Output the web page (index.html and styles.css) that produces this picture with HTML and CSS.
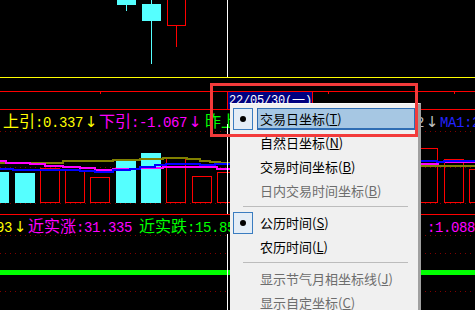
FILE: index.html
```html
<!DOCTYPE html>
<html>
<head>
<meta charset="utf-8">
<link rel="stylesheet" href="styles.css">
</head>
<body>
<div class="screen">
  <svg class="chart" width="475" height="77" viewBox="0 0 475 77">
    <rect x="126" y="5" width="1" height="6" fill="#55ffff"/>
    <rect x="117" y="0" width="19" height="5" fill="#55ffff"/>
    <rect x="151" y="0" width="1" height="64" fill="#55ffff"/>
    <rect x="142" y="4" width="19" height="17" fill="#55ffff"/>
    <rect x="176" y="26" width="1" height="21" fill="#ff0000"/>
    <rect x="167.5" y="-0.5" width="18" height="26" fill="none" stroke="#ff0000"/>
  </svg>
  <div class="yline"></div>
  <div class="blank"></div>
  <div class="dateaxis">
    <div class="datelabel"><span class="dl-n">22/05/30(</span><span class="dl-c">一</span><span class="dl-n">)</span></div>
  </div>

  <div class="pane">
    <div class="info">
      <div class="info-l">
        <span class="seg yel first1">上引<span class="n">:0.337</span><span class="arr">↓</span></span>
        <span class="seg mag">下引<span class="n">:-1.067</span><span class="arr">↓</span></span>
        <span class="seg grn sp2">昨上</span>
      </div>
      <div class="info-r r1">
        <span class="seg gry"><span class="n">2</span><span class="arr">↓</span></span>
        <span class="seg blu"><span class="n">MA1:2</span></span>
      </div>
    </div>
    <svg class="chart" width="475" height="83" viewBox="0 0 475 83">
      <g stroke="#800000" stroke-dasharray="1 4">
        <line x1="0" y1="0.5" x2="475" y2="0.5"/>
        <line x1="0" y1="36.5" x2="475" y2="36.5"/>
        <line x1="0" y1="72.5" x2="475" y2="72.5"/>
      </g>
      <g fill="#55ffff">
        <rect x="0" y="41" width="9" height="31"/>
        <rect x="15" y="42" width="20" height="30"/>
        <rect x="116" y="28" width="20" height="44"/>
        <rect x="141" y="22" width="20" height="50"/>
      </g>
      <g fill="none" stroke="#ff0000">
        <rect x="40.5" y="37.5" width="19" height="34"/>
        <rect x="65.5" y="39.5" width="19" height="32"/>
        <rect x="90.5" y="46.5" width="19" height="25"/>
        <rect x="166.5" y="27.5" width="19" height="44"/>
        <rect x="192.5" y="45.5" width="19" height="26"/>
        <rect x="217.5" y="41.5" width="19" height="30"/>
        <rect x="418.5" y="17.5" width="19" height="54"/>
        <rect x="444.5" y="28.5" width="19" height="43"/>
        <rect x="469.5" y="38.5" width="19" height="33"/>
      </g>
      <rect x="183" y="26" width="3" height="2" fill="#ff0000"/>
      <g fill="none" stroke-width="2">
        <path stroke="#808000" d="M0 32 H63 V30 H113 V29 H140 V28 H163 V27 H187 V28 H200 V30 H210 V31 H220 V32 H240 V34 H420 V35 H475"/>
        <path stroke="#ff00ff" d="M0 30 H6 V32 H30 V33 H45 V35 H63 V36 H80 V37 H95 V39 H113 V38 H140 V37 H163 V36 H217 V38 H240 V36 H420 V33 H438 V31 H475"/>
        <path stroke="#0000ff" d="M0 38 H13 V39 H80 V40 H95 V41 H113 V39 H130 V38 H140 V36 H155 V34 H166 V33 H185 V33 H200 V34 H215 V33 H240 V32 H420 V30 H437 V31 H444 V30 H475"/>
      </g>
    </svg>
  </div>

  <div class="pane top-red">
    <div class="info">
      <div class="info-l">
        <span class="seg yel first2"><span class="n">93</span><span class="arr">↓</span></span>
        <span class="seg mag">近实涨<span class="n">:31.335</span></span>
        <span class="seg grn sp7">近实跌<span class="n">:15.85</span></span>
      </div>
      <div class="info-r r2">
        <span class="seg mag"><span class="n">:1.088</span></span>
      </div>
    </div>
    <svg class="chart" width="475" height="75" viewBox="0 0 475 75">
      <g stroke="#800000" stroke-dasharray="1 4">
        <line x1="0" y1="0.5" x2="475" y2="0.5"/>
        <line x1="0" y1="18.5" x2="475" y2="18.5"/>
        <line x1="0" y1="56.5" x2="475" y2="56.5"/>
      </g>
      <rect x="0" y="35" width="475" height="5" fill="#00ff00"/>
    </svg>
  </div>

  <div class="vline v1"></div>
  <div class="vline v2"></div>
  <div class="vline v3"></div>

  <div class="menu">
    <div class="item">
      <span class="chk on"><span class="dot"></span></span>
      <span class="lbl hl">交易日坐标(<u>T</u>)</span>
    </div>
    <div class="item">
      <span class="chk"></span>
      <span class="lbl">自然日坐标(<u>N</u>)</span>
    </div>
    <div class="item">
      <span class="chk"></span>
      <span class="lbl">交易时间坐标(<u>B</u>)</span>
    </div>
    <div class="item dis">
      <span class="chk"></span>
      <span class="lbl">日内交易时间坐标(<u>B</u>)</span>
    </div>
    <div class="sep"></div>
    <div class="item">
      <span class="chk on"><span class="dot"></span></span>
      <span class="lbl">公历时间(<u>S</u>)</span>
    </div>
    <div class="item">
      <span class="chk"></span>
      <span class="lbl">农历时间(<u>L</u>)</span>
    </div>
    <div class="sep"></div>
    <div class="item dis">
      <span class="chk"></span>
      <span class="lbl">显示节气月相坐标线(<u>J</u>)</span>
    </div>
    <div class="item dis">
      <span class="chk"></span>
      <span class="lbl">显示自定坐标(<u>C</u>)</span>
    </div>
  </div>

  <div class="mark"></div>
</div>
</body>
</html>
```

FILE: styles.css
```css
html, body {
  margin: 0;
  padding: 0;
  background: #000;
}

.screen {
  position: relative;
  width: 475px;
  height: 310px;
  overflow: hidden;
  background: #000;
}

.chart {
  display: block;
}

.yline {
  height: 1px;
  background: #ffff00;
}

.blank {
  height: 13px;
}

.dateaxis {
  height: 17px;
  border-top: 1px solid #ff0000;
  border-bottom: 1px solid #ff0000;
  background-image:
    linear-gradient(#ff0000, #ff0000),
    linear-gradient(#ff0000, #ff0000),
    linear-gradient(#ff0000, #ff0000);
  background-size: 1px 2px;
  background-repeat: no-repeat;
  background-position: 100px 0, 328px 0, 454px 0;
}

.datelabel {
  margin-left: 227px;
  width: 83px;
  height: 17px;
  padding-left: 1px;
  border-left: 1px solid #ff0000;
  border-right: 1px solid #ff0000;
  background: #000080;
  color: #ffffff;
  line-height: 14px;
  white-space: nowrap;
}

.dl-n {
  font-family: "Liberation Mono", monospace;
  font-size: 12px;
  letter-spacing: -0.2px;
}

.dl-c {
  font-family: "Noto Sans CJK SC", sans-serif;
  font-size: 13px;
}

.top-red {
  border-top: 1px solid #ff0000;
}

.info {
  display: flex;
  height: 21px;
  white-space: nowrap;
  font-family: "Noto Sans CJK SC", sans-serif;
  font-size: 16px;
  line-height: 21px;
}

.top-red .info {
  height: 20px;
  line-height: 20px;
}

.info-l {
  display: flex;
  flex: 1 1 auto;
  min-width: 0;
}

.info-r {
  display: flex;
  flex: none;
}

.r1 {
  width: 59px;
}

.r2 {
  width: 48px;
}

.seg {
  display: block;
  flex: none;
}

.first1 {
  margin-left: 3px;
}

.first2 {
  margin-left: -4px;
}

.sp2 {
  margin-left: 2px;
}

.sp7 {
  margin-left: 7px;
}

.n {
  font-family: "Liberation Mono", monospace;
  font-size: 14px;
  letter-spacing: -0.4px;
}

.arr {
  display: inline-block;
  width: 16px;
  text-align: center;
  font-family: "DejaVu Sans", sans-serif;
  font-size: 15px;
}

.yel { color: #ffff00; }
.mag { color: #ff00ff; }
.grn { color: #00ff00; }
.gry { color: #c0c0c0; }
.blu { color: #2222ff; }

.vline {
  position: absolute;
  left: 227px;
  width: 1px;
  background: #ffffff;
}

.v1 { top: 0; height: 77px; }
.v2 { top: 124px; height: 90px; }
.v3 { top: 234px; height: 76px; }

.menu {
  position: absolute;
  left: 230px;
  top: 103px;
  width: 188px;
  height: 220px;
  padding-top: 3px;
  background: #f0f0f0;
  border-top: 1px solid #fbfbfb;
  border-right: 3px solid #a0a0a0;
  font-family: "Noto Sans CJK SC", sans-serif;
  font-size: 13px;
  color: #000;
}

.item {
  display: flex;
  align-items: center;
  height: 24px;
}

.chk {
  flex: none;
  width: 20px;
  height: 22px;
  margin-left: 3px;
  box-sizing: border-box;
  display: flex;
  align-items: center;
  justify-content: center;
}

.chk.on {
  border: 1px solid #3a7cc0;
  background: #e4edf6;
}

.dot {
  width: 6px;
  height: 6px;
  border-radius: 50%;
  background: #000;
}

.lbl {
  flex: none;
  width: 158px;
  height: 22px;
  margin-left: 4px;
  padding-left: 3px;
  box-sizing: border-box;
  line-height: 22px;
  white-space: nowrap;
}

.lbl.hl {
  background: #a6c7e3;
  border: 1px solid #2f6db3;
  border-bottom-width: 2px;
  padding-left: 2px;
  line-height: 19px;
}

.dis {
  color: #6d6d6d;
}

.sep {
  height: 1px;
  margin: 3px 10px 4px 13px;
  background: #bcbcbc;
}

.mark {
  position: absolute;
  left: 210px;
  top: 83px;
  width: 208px;
  height: 54px;
  box-sizing: border-box;
  border: 3px solid #f33b3b;
}
```
